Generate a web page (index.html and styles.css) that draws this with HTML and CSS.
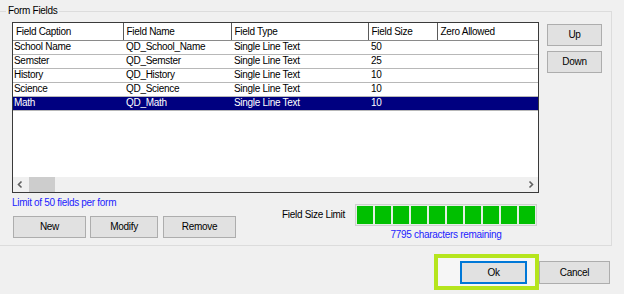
FILE: index.html
```html
<!DOCTYPE html>
<html>
<head>
<meta charset="utf-8">
<link rel="stylesheet" href="styles.css">
</head>
<body>
<div class="dialog">
  <div class="group">
    <span class="legend">Form Fields</span>
    <div class="top">
      <div class="list">
        <table class="grid">
          <colgroup>
            <col class="c1"><col class="c2"><col class="c3"><col class="c4"><col class="c5">
          </colgroup>
          <thead>
            <tr><th>Field Caption</th><th>Field Name</th><th>Field Type</th><th>Field Size</th><th>Zero Allowed</th></tr>
          </thead>
          <tbody>
            <tr><td>School Name</td><td>QD_School_Name</td><td>Single Line Text</td><td>50</td><td></td></tr>
            <tr><td>Semster</td><td>QD_Semster</td><td>Single Line Text</td><td>25</td><td></td></tr>
            <tr><td>History</td><td>QD_History</td><td>Single Line Text</td><td>10</td><td></td></tr>
            <tr><td>Science</td><td>QD_Science</td><td>Single Line Text</td><td>10</td><td></td></tr>
            <tr class="sel"><td>Math</td><td>QD_Math</td><td>Single Line Text</td><td>10</td><td></td></tr>
          </tbody>
        </table>
        <div class="fill"></div>
        <div class="hscroll">
          <span class="arrow">
            <svg width="15" height="15" viewBox="0 0 15 15"><path d="M8.5 4.5 L5.5 7.5 L8.5 10.5" fill="none" stroke="#606060" stroke-width="1.6"/></svg>
          </span>
          <span class="thumb"></span>
          <span class="track"></span>
          <span class="arrow">
            <svg width="15" height="15" viewBox="0 0 15 15"><path d="M6.5 4.5 L9.5 7.5 L6.5 10.5" fill="none" stroke="#606060" stroke-width="1.6"/></svg>
          </span>
        </div>
      </div>
      <div class="side">
        <button class="btn side-btn">Up</button>
        <button class="btn side-btn">Down</button>
      </div>
    </div>
    <div class="bottom">
      <div class="left">
        <div class="limit">Limit of 50 fields per form</div>
        <div class="btns">
          <button class="btn b-new">New</button>
          <button class="btn b-mod">Modify</button>
          <button class="btn b-rem">Remove</button>
        </div>
      </div>
      <div class="right">
        <div class="meter-row">
          <span class="meter-label">Field Size Limit</span>
          <div class="meter">
            <span class="seg"></span><span class="seg"></span><span class="seg"></span><span class="seg"></span><span class="seg"></span>
            <span class="seg"></span><span class="seg"></span><span class="seg"></span><span class="seg"></span><span class="seg"></span>
          </div>
        </div>
        <div class="remaining">7795 characters remaining</div>
      </div>
    </div>
  </div>
  <div class="footer">
    <div class="hl"><button class="btn ok">Ok</button></div>
    <button class="btn cancel">Cancel</button>
  </div>
</div>
</body>
</html>
```
FILE: styles.css
```css
* { box-sizing: border-box; }
html, body { margin: 0; padding: 0; }
body {
  background: #f0f0f0;
  font-family: "Liberation Sans", Arial, sans-serif;
  font-size: 10px;
  letter-spacing: -0.3px;
  color: #000;
  width: 624px;
  height: 294px;
  overflow: hidden;
}
.dialog { width: 624px; }

.group {
  position: relative;
  margin: 11px 12px 0 -2px;
  height: 235px;
  border: 1px solid #dcdcdc;
  padding: 10px 9px 0 13px;
}
.legend {
  position: absolute;
  left: 7px;
  top: -7px;
  line-height: 12px;
  padding: 0 2px 0 2px;
  background: #f0f0f0;
}

.top { display: flex; align-items: flex-start; }
.list {
  width: 527px;
  height: 171px;
  border: 1px solid #3a3a3a;
  background: #fff;
  display: flex;
  flex-direction: column;
}
.grid {
  border-collapse: collapse;
  table-layout: fixed;
  width: 525px;
}
.c1 { width: 110px; }
.c2 { width: 108px; }
.c3 { width: 137px; }
.c4 { width: 69px; }
.c5 { width: 101px; }
.grid th {
  height: 17px;
  font-weight: normal;
  text-align: left;
  padding: 0 0 0 3px;
  border-right: 1px solid #5a5a5a;
  border-bottom: 1px solid #8a8a8a;
  white-space: nowrap;
  overflow: hidden;
  line-height: 15px;
}
.grid th:last-child { border-right: none; }
.grid td {
  height: 14px;
  padding: 0 0 0 3px;
  border-bottom: 1px solid #b8b8b8;
  white-space: nowrap;
  overflow: hidden;
  line-height: 12px;
}
.grid td:first-child { padding-left: 1px; }
.grid tr.sel td { background: #000080; color: #fff; }
.fill { flex: 1; }
.hscroll {
  height: 15px;
  display: flex;
  background: #f0f0f0;
}
.arrow { width: 15px; height: 15px; display: block; }
.arrow svg { display: block; }
.thumb { width: 26px; margin-left: 1px; background: #cdcdcd; }
.track { flex: 1; }

.side {
  margin-left: 8px;
  margin-top: 2px;
  display: flex;
  flex-direction: column;
  gap: 5px;
}
.btn {
  font-family: "Liberation Sans", Arial, sans-serif;
  font-size: 10px;
  letter-spacing: -0.3px;
  color: #000;
  background: #e1e1e1;
  border: 1px solid #adadad;
  padding: 0;
  margin: 0;
  height: 22px;
  line-height: 20px;
  text-align: center;
}
.side-btn { width: 55px; }

.bottom { display: flex; align-items: flex-start; }
.left { display: flex; flex-direction: column; }
.limit {
  color: #1c1cff;
  line-height: 12px;
  margin-top: 4px;
  margin-left: 0;
}
.btns { display: flex; margin-top: 7px; margin-left: 1px; }
.b-new { width: 73px; }
.b-mod { width: 68px; margin-left: 4px; }
.b-rem { width: 73px; margin-left: 5px; }

.right {
  margin-left: auto;
  margin-right: 65px;
  margin-top: 11px;
  display: flex;
  flex-direction: column;
  align-items: flex-end;
}
.meter-row { display: flex; align-items: center; }
.meter-label { margin-right: 10px; line-height: 12px; }
.meter {
  display: flex;
  gap: 2px;
  padding: 1px;
  border: 1px solid #cfcfcf;
  background: #e4efe4;
  height: 22px;
}
.seg { width: 16px; background: #00bf00; display: block; }
.remaining {
  color: #1c1cff;
  line-height: 12px;
  margin-top: 3px;
  width: 182px;
  text-align: center;
}

.footer {
  display: flex;
  justify-content: flex-end;
  align-items: flex-start;
  padding-right: 14px;
  margin-top: 8px;
}
.hl {
  width: 105px;
  height: 36px;
  border: 4px solid #b5e51d;
  background: #f6f6f6;
  padding: 3px 0 0 22px;
}
.ok {
  width: 67px;
  height: 23px;
  border: 2px solid #0078d7;
  line-height: 19px;
}
.cancel {
  width: 71px;
  height: 23px;
  margin-top: 7px;
}
```
